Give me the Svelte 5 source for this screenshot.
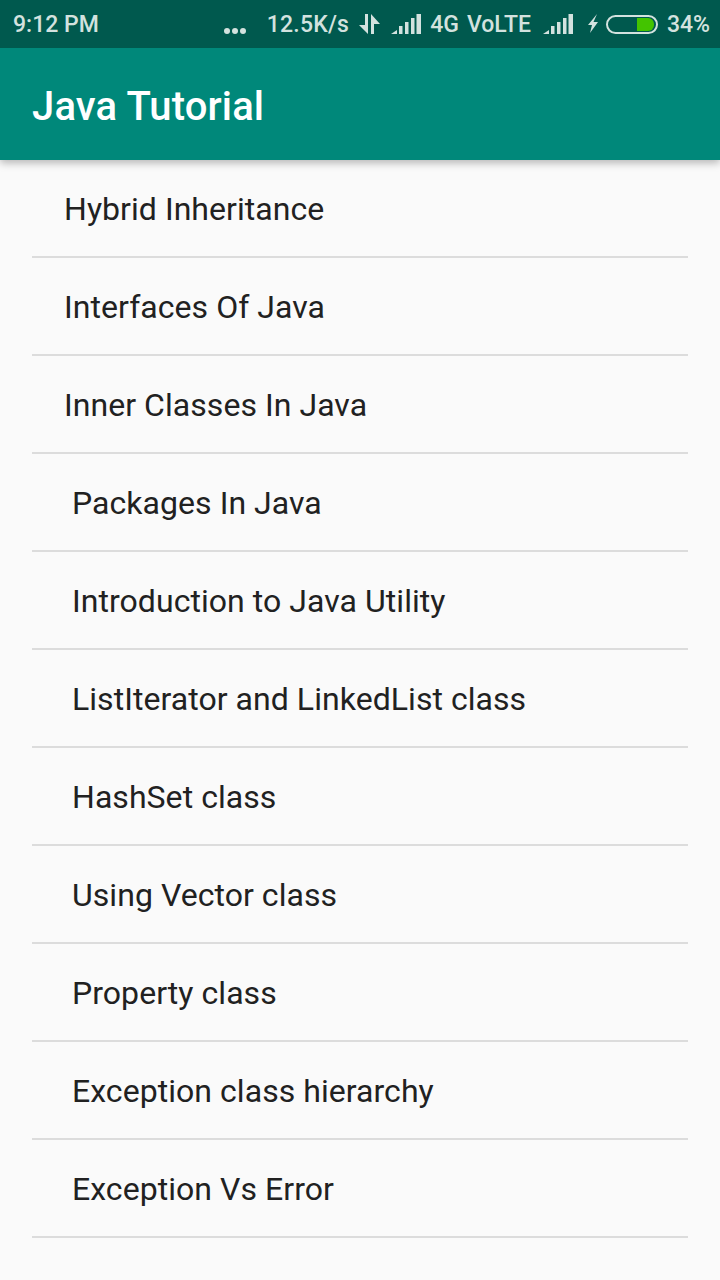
<script lang="ts">
  const topics = [
    { label: 'Hybrid Inheritance', pad: false },
    { label: 'Interfaces Of Java', pad: false },
    { label: 'Inner Classes In Java', pad: false },
    { label: 'Packages In Java', pad: true },
    { label: 'Introduction to Java Utility', pad: true },
    { label: 'ListIterator and LinkedList class', pad: true },
    { label: 'HashSet class', pad: true },
    { label: 'Using Vector class', pad: true },
    { label: 'Property class', pad: true },
    { label: 'Exception class hierarchy', pad: true },
    { label: 'Exception Vs Error', pad: true },
  ];
</script>

<div class="screen">
  <header class="app-header">
    <div class="status-bar">
      <span class="time">9:12 PM</span>
      <div class="status-right">
        <span class="dots"><i></i><i></i><i></i></span>
        <span class="speed">12.5K/s</span>
        <svg class="updown" width="22" height="20" viewBox="0 0 22 20">
          <path d="M6 0h3v20L0 11h6zM12 0l9 10h-6v10h-3z" fill="#d3e2df" />
        </svg>
        <svg class="signal" width="30" height="20" viewBox="0 0 30 20">
          <path d="M0 20l6-4v4zM8 12h3.500v8H8zM14 8h3.500v12H14zM20 4h3.500v16H20zM25.500 0h4.500v20h-4.500z" fill="#d3e2df" />
        </svg>
        <span class="net">4G</span>
        <span class="net volte">VoLTE</span>
        <svg class="signal second" width="30" height="20" viewBox="0 0 30 20">
          <path d="M0 20l6-4v4zM8 12h3.500v8H8zM14 8h3.500v12H14zM20 4h3.500v16H20zM25.500 0h4.500v20h-4.500z" fill="#d3e2df" />
        </svg>
        <svg class="bolt" width="12" height="20" viewBox="0 0 12 20">
          <path d="M10 0L1 11h4l-2 8 8-11H6.500z" fill="#d3e2df" />
        </svg>
        <span class="battery"><span class="battery-fill"></span></span>
        <span class="percent">34%</span>
      </div>
    </div>
    <div class="toolbar">Java Tutorial</div>
  </header>

  <ul class="topic-list">
    {#each topics as topic}
      <li class="topic" class:topic-pad={topic.pad}>{topic.label}</li>
    {/each}
  </ul>
</div>

<style>
  :global(body) {
    margin: 0;
    background: #fafafa;
  }

  .screen {
    width: 720px;
    height: 1280px;
    overflow: hidden;
    background: #fafafa;
    font-family: Roboto, "Noto Sans", sans-serif;
  }

  .app-header {
    position: relative;
    background: #00887a;
    box-shadow: 0 3px 8px rgba(0, 0, 0, 0.28);
  }

  .status-bar {
    display: flex;
    align-items: center;
    justify-content: space-between;
    height: 48px;
    padding: 0 10px 0 13px;
    box-sizing: border-box;
    background: #00594e;
    color: #d3e2df;
    font-size: 23px;
    font-weight: 500;
  }

  .status-right {
    display: flex;
    align-items: center;
  }

  .dots {
    display: flex;
    gap: 2px;
    margin-top: 14px;
    margin-right: 21px;
  }

  .dots i {
    width: 6px;
    height: 6px;
    border-radius: 50%;
    background: #d3e2df;
  }

  .speed {
    margin-right: 10px;
    letter-spacing: 0.2px;
  }

  .updown {
    margin-right: 10px;
  }

  .net {
    margin-left: 9px;
  }

  .volte {
    margin-left: 8px;
  }

  .signal.second {
    margin-left: 12px;
  }

  .bolt {
    margin-left: 14px;
  }

  .battery {
    display: flex;
    justify-content: flex-end;
    width: 52px;
    height: 19px;
    margin-left: 7px;
    padding: 1px 2px;
    box-sizing: border-box;
    border: 2px solid #d3e2df;
    border-radius: 10px;
  }

  .battery-fill {
    width: 17px;
    height: 13px;
    border-radius: 0 6px 6px 0;
    background: #43c400;
  }

  .percent {
    margin-left: 9px;
  }

  .toolbar {
    display: flex;
    align-items: center;
    height: 112px;
    padding-left: 32px;
    padding-top: 4px;
    box-sizing: border-box;
    color: #fff;
    font-size: 40px;
    font-weight: 500;
    letter-spacing: 0.15px;
  }

  .topic-list {
    display: flex;
    flex-direction: column;
    margin: 0 32px;
    padding: 0;
    list-style: none;
  }

  .topic {
    display: flex;
    align-items: center;
    height: 98px;
    padding-left: 32px;
    padding-top: 2px;
    box-sizing: border-box;
    border-bottom: 2px solid #dcdcdc;
    color: #212121;
    font-size: 32px;
    letter-spacing: 0.05px;
  }

  .topic-pad {
    padding-left: 40px;
  }
</style>
